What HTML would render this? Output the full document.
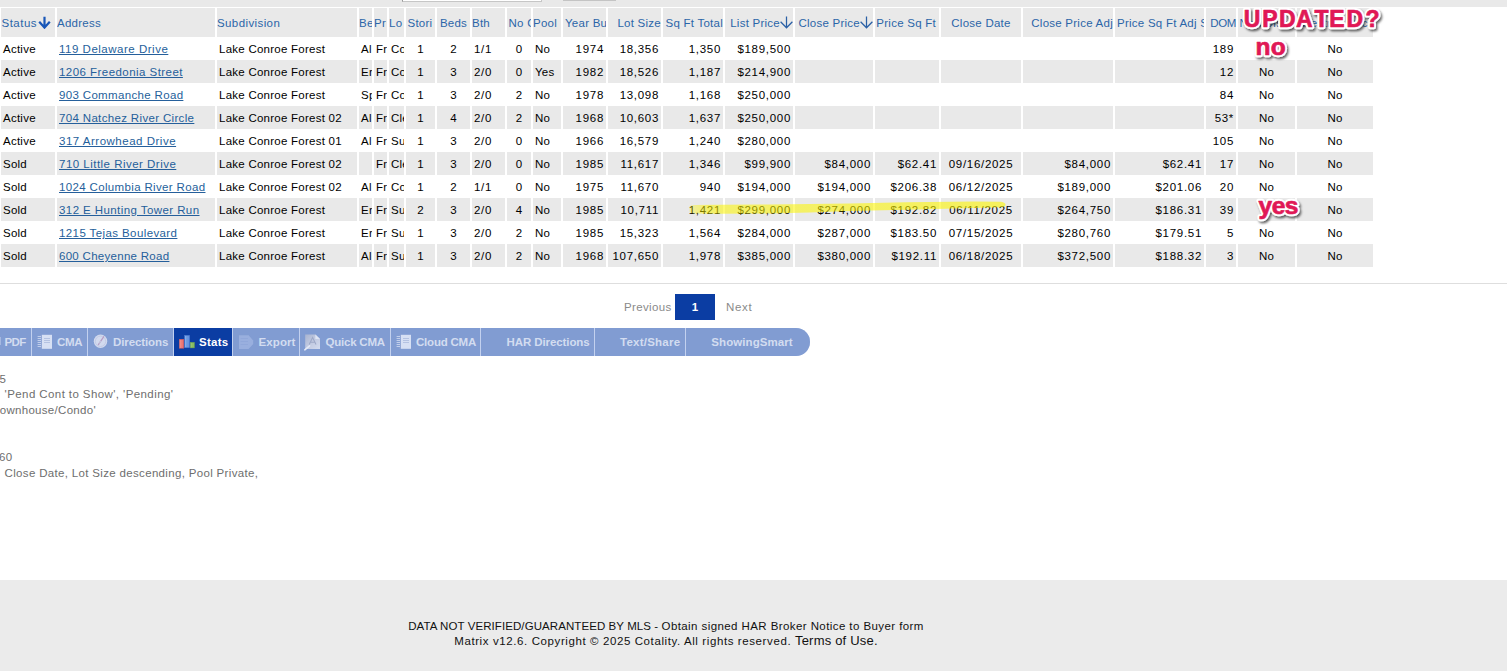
<!DOCTYPE html>
<html>
<head>
<meta charset="utf-8">
<title>Matrix</title>
<style>
*{box-sizing:border-box;margin:0;padding:0}
html,body{width:1507px;height:671px;overflow:hidden;background:#fff}
body{position:relative;font-family:"Liberation Sans",sans-serif;font-size:12px;color:#000}
.abs{position:absolute}
#topband{left:0;top:0;width:1507px;height:7px;background:#e9e9e9}
#topinput{left:402px;top:-10px;width:140px;height:12px;background:#fff;border:1px solid #c6c6c6;border-left-color:#999}
#topbtn{left:563px;top:-10px;width:53px;height:11px;background:#c4c4c4}
/* table */
#grid{left:-1px;top:8px;border-collapse:separate;border-spacing:2px 0;table-layout:fixed;width:1376px}
#grid td,#grid th{height:23px;padding:2px 2px 0 2px;white-space:nowrap;overflow:hidden;font-weight:normal;font-size:11.5px;letter-spacing:0.25px;line-height:21px;vertical-align:top;text-align:left}
#grid th{height:29px;line-height:27px;background:#e9e9e9;color:#2b65a8;padding:2px 0 0 0}
#grid th.p2{padding-left:2px}
#grid th.p3{padding-right:3px}
#grid tr.g td{background:#e9e9e9}
#grid td.c,#grid th.c{text-align:center}
#grid td.r,#grid th.r{text-align:right}
#grid td.n{letter-spacing:0.7px}
#grid a{color:#255f9b;text-decoration:underline}
#grid td.b{letter-spacing:.7px}
.arr{display:inline-block;vertical-align:middle;margin-top:-3px}
#hr{left:0;top:283px;width:1507px;height:1px;background:#dedede}
/* pager */
.pg{top:294px;height:26px;line-height:26px;font-size:11.5px;color:#8a8a8a;white-space:nowrap}
#pg1{left:675px;width:40px;background:#0b3da3;color:#fff;text-align:center;font-weight:bold}
/* button bar */
#bar{left:0;top:328px;height:28px;width:810px;background:#c3d1ef;border-radius:0 14px 14px 0;overflow:hidden}
#bar .b{position:absolute;top:0;height:28px;line-height:28px;background:#819cd2;color:#d3dcf0;font-size:11.5px;font-weight:bold;white-space:nowrap}
#bar .b.on{background:#0b3da3;color:#fff}
#bar .b span{position:absolute;top:0}
#bar .b svg{position:absolute}
/* criteria text */
.crit{color:#6e6e6e;font-size:11.5px;white-space:nowrap;line-height:14px}
/* footer */
#foot{left:0;top:580px;width:1507px;height:91px;background:#ebebeb}
.ft{left:0;width:1332px;text-align:center;font-size:11.5px;color:#111;white-space:nowrap;line-height:15px}
/* highlight */
#hl{left:685px;top:198px}
/* annotations */
#ann{left:0;top:0;width:1507px;height:671px;pointer-events:none}
#ann text{font-family:"Liberation Sans",sans-serif;font-weight:bold}
#ann .o{fill:#fff;stroke:#fff;stroke-width:4.6px;stroke-linejoin:round;stroke-linecap:round}
#ann .f{fill:#e01856;stroke:#e01856;stroke-width:0.7px;stroke-linejoin:round}
</style>
</head>
<body>
<div class="abs" id="topband"></div>
<div class="abs" id="topinput"></div>
<div class="abs" id="topbtn"></div>

<table class="abs" id="grid" cellspacing="0">
<colgroup><col style="width:54px"><col style="width:158px"><col style="width:140px"><col style="width:13px"><col style="width:13px"><col style="width:15px"><col style="width:29px"><col style="width:33px"><col style="width:33px"><col style="width:24px"><col style="width:28px"><col style="width:43px"><col style="width:53px"><col style="width:60px"><col style="width:68px"><col style="width:78px"><col style="width:64px"><col style="width:80px"><col style="width:90px"><col style="width:89px"><col style="width:30px"><col style="width:57px"><col style="width:76px"></colgroup>
<tr id="hdr"><th><span style='letter-spacing:.5px;padding-left:.5px'>Status</span><svg class="arr" style="margin-left:1px" width="13" height="13" viewBox="0 0 13 13"><path d="M6.5 0.8 V11 M1.2 5.8 L6.5 11.6 L11.8 5.8" fill="none" stroke="#1957b8" stroke-width="2.2" stroke-linecap="butt" stroke-linejoin="miter"/></svg></th><th>Address</th><th><span style='letter-spacing:.4px'>Subdivision</span></th><th>Be</th><th>Pr</th><th>Lo</th><th><span style='padding-left:1.5px'>Stori</span></th><th class="c">Beds</th><th>Bth</th><th><span style='padding-left:1.5px'>No G</span></th><th>Pool</th><th class="p2">Year Built</th><th class="r">Lot Size</th><th class="r">Sq Ft Total</th><th class="r">List Price<svg class="arr" width="13" height="13" viewBox="0 0 13 13"><path d="M6.5 0.6 V11.6 M0.6 5.8 L6.5 11.8 L12.4 5.8" fill="none" stroke="#2a60a6" stroke-width="1.25" stroke-linecap="butt" stroke-linejoin="miter"/></svg></th><th class="r">Close Price<svg class="arr" width="13" height="13" viewBox="0 0 13 13"><path d="M6.5 0.6 V11.6 M0.6 5.8 L6.5 11.8 L12.4 5.8" fill="none" stroke="#2a60a6" stroke-width="1.25" stroke-linecap="butt" stroke-linejoin="miter"/></svg></th><th class="r p3">Price Sq Ft</th><th class="c">Close Date</th><th class="r">Close Price Adj</th><th class="p2">Price Sq Ft Adj Sold</th><th class="r"><span style='letter-spacing:-.4px'>DOM</span></th><th><span style='padding-left:1.5px'>Non Discl</span></th><th class="c">Restrict Occ</th></tr>
<tr><td>Active</td><td><a style="letter-spacing:0.51px">119 Delaware Drive</a></td><td>Lake Conroe Forest</td><td>Al</td><td>Fr</td><td>Co</td><td class="c">1</td><td class="c">2</td><td class="b">1/1</td><td class="c">0</td><td>No</td><td class="r n">1974</td><td class="r n">18,356</td><td class="r n">1,350</td><td class="r n">$189,500</td><td class="r n"></td><td class="r n"></td><td class="c n"></td><td class="r n"></td><td class="r n"></td><td class="r n">189</td><td class="c"></td><td class="c">No</td></tr>
<tr class="g"><td>Active</td><td><a style="letter-spacing:0.45px">1206 Freedonia Street</a></td><td>Lake Conroe Forest</td><td>Er</td><td>Fr</td><td>Co</td><td class="c">1</td><td class="c">3</td><td class="b">2/0</td><td class="c">0</td><td>Yes</td><td class="r n">1982</td><td class="r n">18,526</td><td class="r n">1,187</td><td class="r n">$214,900</td><td class="r n"></td><td class="r n"></td><td class="c n"></td><td class="r n"></td><td class="r n"></td><td class="r n">12</td><td class="c">No</td><td class="c">No</td></tr>
<tr><td>Active</td><td><a style="letter-spacing:0.34px">903 Commanche Road</a></td><td>Lake Conroe Forest</td><td>Sp</td><td>Fr</td><td>Co</td><td class="c">1</td><td class="c">3</td><td class="b">2/0</td><td class="c">2</td><td>No</td><td class="r n">1978</td><td class="r n">13,098</td><td class="r n">1,168</td><td class="r n">$250,000</td><td class="r n"></td><td class="r n"></td><td class="c n"></td><td class="r n"></td><td class="r n"></td><td class="r n">84</td><td class="c">No</td><td class="c">No</td></tr>
<tr class="g"><td>Active</td><td><a style="letter-spacing:0.34px">704 Natchez River Circle</a></td><td>Lake Conroe Forest 02</td><td>Al</td><td>Fr</td><td>Cle</td><td class="c">1</td><td class="c">4</td><td class="b">2/0</td><td class="c">2</td><td>No</td><td class="r n">1968</td><td class="r n">10,603</td><td class="r n">1,637</td><td class="r n">$250,000</td><td class="r n"></td><td class="r n"></td><td class="c n"></td><td class="r n"></td><td class="r n"></td><td class="r n">53*</td><td class="c">No</td><td class="c">No</td></tr>
<tr><td>Active</td><td><a style="letter-spacing:0.51px">317 Arrowhead Drive</a></td><td>Lake Conroe Forest 01</td><td>Al</td><td>Fr</td><td>Su</td><td class="c">1</td><td class="c">3</td><td class="b">2/0</td><td class="c">0</td><td>No</td><td class="r n">1966</td><td class="r n">16,579</td><td class="r n">1,240</td><td class="r n">$280,000</td><td class="r n"></td><td class="r n"></td><td class="c n"></td><td class="r n"></td><td class="r n"></td><td class="r n">105</td><td class="c">No</td><td class="c">No</td></tr>
<tr class="g"><td>Sold</td><td><a style="letter-spacing:0.48px">710 Little River Drive</a></td><td>Lake Conroe Forest 02</td><td></td><td>Fr</td><td>Cle</td><td class="c">1</td><td class="c">3</td><td class="b">2/0</td><td class="c">0</td><td>No</td><td class="r n">1985</td><td class="r n">11,617</td><td class="r n">1,346</td><td class="r n">$99,900</td><td class="r n">$84,000</td><td class="r n">$62.41</td><td class="c n">09/16/2025</td><td class="r n">$84,000</td><td class="r n">$62.41</td><td class="r n">17</td><td class="c">No</td><td class="c">No</td></tr>
<tr><td>Sold</td><td><a style="letter-spacing:0.35px">1024 Columbia River Road</a></td><td>Lake Conroe Forest 02</td><td>Al</td><td>Fr</td><td>Co</td><td class="c">1</td><td class="c">2</td><td class="b">1/1</td><td class="c">0</td><td>No</td><td class="r n">1975</td><td class="r n">11,670</td><td class="r n">940</td><td class="r n">$194,000</td><td class="r n">$194,000</td><td class="r n">$206.38</td><td class="c n">06/12/2025</td><td class="r n">$189,000</td><td class="r n">$201.06</td><td class="r n">20</td><td class="c">No</td><td class="c">No</td></tr>
<tr class="g"><td>Sold</td><td><a style="letter-spacing:0.42px">312 E Hunting Tower Run</a></td><td>Lake Conroe Forest</td><td>Er</td><td>Fr</td><td>Su</td><td class="c">2</td><td class="c">3</td><td class="b">2/0</td><td class="c">4</td><td>No</td><td class="r n">1985</td><td class="r n">10,711</td><td class="r n">1,421</td><td class="r n">$299,000</td><td class="r n">$274,000</td><td class="r n">$192.82</td><td class="c n">06/11/2025</td><td class="r n">$264,750</td><td class="r n">$186.31</td><td class="r n">39</td><td class="c"></td><td class="c">No</td></tr>
<tr><td>Sold</td><td><a style="letter-spacing:0.40px">1215 Tejas Boulevard</a></td><td>Lake Conroe Forest</td><td>Er</td><td>Fr</td><td>Su</td><td class="c">1</td><td class="c">3</td><td class="b">2/0</td><td class="c">2</td><td>No</td><td class="r n">1985</td><td class="r n">15,323</td><td class="r n">1,564</td><td class="r n">$284,000</td><td class="r n">$287,000</td><td class="r n">$183.50</td><td class="c n">07/15/2025</td><td class="r n">$280,760</td><td class="r n">$179.51</td><td class="r n">5</td><td class="c">No</td><td class="c">No</td></tr>
<tr class="g"><td>Sold</td><td><a style="letter-spacing:0.29px">600 Cheyenne Road</a></td><td>Lake Conroe Forest</td><td>Al</td><td>Fr</td><td>Su</td><td class="c">1</td><td class="c">3</td><td class="b">2/0</td><td class="c">2</td><td>No</td><td class="r n">1968</td><td class="r n">107,650</td><td class="r n">1,978</td><td class="r n">$385,000</td><td class="r n">$380,000</td><td class="r n">$192.11</td><td class="c n">06/18/2025</td><td class="r n">$372,500</td><td class="r n">$188.32</td><td class="r n">3</td><td class="c">No</td><td class="c">No</td></tr>
</table>

<svg class="abs" id="hl" width="330" height="20" viewBox="685 198 330 20"><defs><linearGradient id="hg" x1="689" x2="1006" gradientUnits="userSpaceOnUse"><stop offset="0" stop-color="#fdf600" stop-opacity=".3"/><stop offset=".06" stop-color="#fdf600" stop-opacity=".55"/><stop offset="1" stop-color="#fdf600" stop-opacity=".6"/></linearGradient></defs><path d="M689.5 206.5 Q690.5 205 694 205 L720 204.7 L770 204.5 L810 204 L850 203.4 L906 202.3 L974 201.6 L1001 201.8 Q1006 203 1005.5 205 Q1005 207 1001 207.3 L974 208 L906 209.7 L850 210.9 L810 212.6 L770 213.6 L720 213.7 L694 213.5 Q690 213 689.5 211.5 Z" fill="url(#hg)"/></svg>

<div class="abs" id="hr"></div>

<div class="abs pg" style="left:624px;letter-spacing:.36px">Previous</div>
<div class="abs pg" id="pg1">1</div>
<div class="abs pg" style="left:726px;letter-spacing:.65px">Next</div>

<div class="abs" id="bar">
 <div class="b" style="left:0;width:31px"><span style="left:4.6px;letter-spacing:-.7px">PDF</span></div>
 <div class="b" style="left:32px;width:55px"><span style="left:25px;letter-spacing:-.3px">CMA</span></div>
 <div class="b" style="left:88px;width:85px"><span style="left:25px;letter-spacing:-.1px">Directions</span></div>
 <div class="b on" style="left:174px;width:58px"><span style="left:25px;letter-spacing:.28px">Stats</span></div>
 <div class="b" style="left:233px;width:66px"><span style="left:25.5px;letter-spacing:.1px">Export</span></div>
 <div class="b" style="left:300px;width:90px"><span style="left:25.5px;letter-spacing:-.22px">Quick CMA</span></div>
 <div class="b" style="left:391px;width:89px"><span style="left:25px;letter-spacing:-.21px">Cloud CMA</span></div>
 <div class="b" style="left:481px;width:113px"><span style="left:25.5px;letter-spacing:-.09px">HAR Directions</span></div>
 <div class="b" style="left:595px;width:90px"><span style="left:25px;letter-spacing:.24px">Text/Share</span></div>
 <div class="b" style="left:686px;width:124px"><span style="left:25.3px;letter-spacing:.08px">ShowingSmart</span></div>
 <svg class="abs" id="icons" style="left:0;top:0" width="810" height="28" viewBox="0 0 810 28">
  <!-- pdf fragment -->
  <rect x="-2" y="9" width="3" height="8" fill="#c9d4ee" opacity=".5"/>
  <!-- notebook (CMA) -->
  <g id="nb">
   <rect x="42" y="6.8" width="10" height="14" fill="#d7e0f4"/>
   <rect x="40.6" y="6.8" width="1.4" height="14" fill="#93a8d6"/>
   <path d="M37.6 8.5H41 M37.6 10.5H41 M37.6 12.5H41 M37.6 14.5H41 M37.6 16.5H41 M37.6 18.5H41" stroke="#cdd8f0" stroke-width="1" opacity=".85"/>
   <path d="M44 10.5H50 M44 12.5H50 M44 14.5H50" stroke="#b4c2e2" stroke-width="1"/>
  </g>
  <!-- compass (Directions) -->
  <circle cx="100.5" cy="13.3" r="6.7" fill="#d3daee"/>
  <circle cx="100.5" cy="13.3" r="5.2" fill="none" stroke="#c3cbe6" stroke-width="1"/>
  <path d="M98.4 16.6 L103.6 8.8" stroke="#b79cc4" stroke-width="1.3" stroke-linecap="round"/>
  <path d="M98.4 16.6 L100.2 12.4 L101.6 13.6 Z" fill="#c3c6e0"/>
  <!-- stats bars -->
  <defs>
   <linearGradient id="gr" x1="0" x2="1"><stop offset="0" stop-color="#f7a9a2"/><stop offset=".35" stop-color="#ef7f7b"/><stop offset="1" stop-color="#e9706f"/></linearGradient>
   <linearGradient id="gb" x1="0" x2="1"><stop offset="0" stop-color="#8fb6f3"/><stop offset=".4" stop-color="#6c9be3"/><stop offset="1" stop-color="#5f8fe0"/></linearGradient>
   <linearGradient id="gg" x1="0" x2="1"><stop offset="0" stop-color="#a7d58a"/><stop offset=".4" stop-color="#8cc064"/><stop offset="1" stop-color="#83b95e"/></linearGradient>
  </defs>
  <rect x="179.3" y="11.3" width="4.5" height="8.9" fill="url(#gr)" stroke="#d0555a" stroke-width=".5"/>
  <rect x="184.7" y="7.4" width="4.9" height="12.3" fill="url(#gb)" stroke="#4b7bd0" stroke-width=".5"/>
  <rect x="190.3" y="14.4" width="4.1" height="5.5" fill="url(#gg)" stroke="#6da54c" stroke-width=".5"/>
  <!-- export -->
  <path d="M239 7.3H248.6L253.2 12.6V16L248.6 20.9H239Z" fill="#a2b6e2" opacity=".75"/>
  <path d="M240.5 10.5H248 M240.5 13.5H248 M240.5 16.5H248" stroke="#91a8da" stroke-width="1"/>
  <!-- quick cma page -->
  <linearGradient id="gq" x1="0" y1="0" x2="1" y2="1"><stop offset="0" stop-color="#a9b4d0"/><stop offset=".55" stop-color="#c4cce3"/><stop offset="1" stop-color="#d3dbef"/></linearGradient>
  <path d="M305.2 6.4H315.4L320 10.9V21H305.2Z" fill="url(#gq)"/>
  <path d="M315.4 6.4V10.9H320Z" fill="#dfe5f4"/>
  <path d="M309.2 16.6 L312.6 9.6 L316 16.6 M310.6 14.2H314.6" fill="none" stroke="#9ea9c8" stroke-width="1.1"/>
  <path d="M304.8 21.8 L309.6 17.8" stroke="#e4e9f6" stroke-width="1.6" stroke-linecap="round"/>
  <!-- notebook (Cloud CMA) -->
  <g transform="translate(359,0)">
   <rect x="42" y="6.8" width="10" height="14" fill="#d7e0f4"/>
   <rect x="40.6" y="6.8" width="1.4" height="14" fill="#93a8d6"/>
   <path d="M37.6 8.5H41 M37.6 10.5H41 M37.6 12.5H41 M37.6 14.5H41 M37.6 16.5H41 M37.6 18.5H41" stroke="#cdd8f0" stroke-width="1" opacity=".85"/>
   <path d="M44 10.5H50 M44 12.5H50 M44 14.5H50" stroke="#b4c2e2" stroke-width="1"/>
  </g>
 </svg>
</div>

<div class="abs crit" style="left:-0.5px;top:372px">5</div>
<div class="abs crit" style="left:4.6px;top:387px;letter-spacing:.41px">'Pend Cont to Show', 'Pending'</div>
<div class="abs crit" style="left:-0.3px;top:403px;letter-spacing:.3px">ownhouse/Condo'</div>
<div class="abs crit" style="left:-1px;top:450px;letter-spacing:.3px">60</div>
<div class="abs crit" style="left:4.6px;top:466px;letter-spacing:.33px">Close Date, Lot Size descending, Pool Private,</div>

<div class="abs" id="foot"></div>
<div class="abs ft" style="top:619px"><span id="f1" style="letter-spacing:.08px">DATA NOT VERIFIED/GUARANTEED BY MLS - </span><span id="f2" style="letter-spacing:.417px">Obtain signed HAR Broker Notice to Buyer form</span></div>
<div class="abs ft" style="top:633px;letter-spacing:.6px">Matrix v12.6. Copyright © 2025 Cotality. All rights reserved. <span style="font-size:13px;letter-spacing:.2px">Terms of Use.</span></div>

<svg class="abs" id="ann" width="1507" height="671" viewBox="0 0 1507 671">
<defs><filter id="ds" x="-10%" y="-30%" width="120%" height="170%"><feDropShadow dx="1.5" dy="2" stdDeviation="1.1" flood-color="#000" flood-opacity="0.6"/></filter></defs>
<g filter="url(#ds)">
<text class="o" x="1243.7 1262.3 1279.1 1295.9 1314.5 1329.3 1346.5 1365.6" y="26.8" font-size="23">UPDATED?</text>
<text class="o" x="1255.5" y="54.8" font-size="24.5" style="letter-spacing:.3px">no</text>
<text class="o" x="1258.5" y="213.8" font-size="24.5" style="letter-spacing:-.45px">yes</text>
</g>
<text class="f" x="1243.7 1262.3 1279.1 1295.9 1314.5 1329.3 1346.5 1365.6" y="26.8" font-size="23">UPDATED?</text>
<text class="f" x="1255.5" y="54.8" font-size="24.5" style="letter-spacing:.3px">no</text>
<text class="f" x="1258.5" y="213.8" font-size="24.5" style="letter-spacing:-.45px">yes</text>
</svg>
</body>
</html>
